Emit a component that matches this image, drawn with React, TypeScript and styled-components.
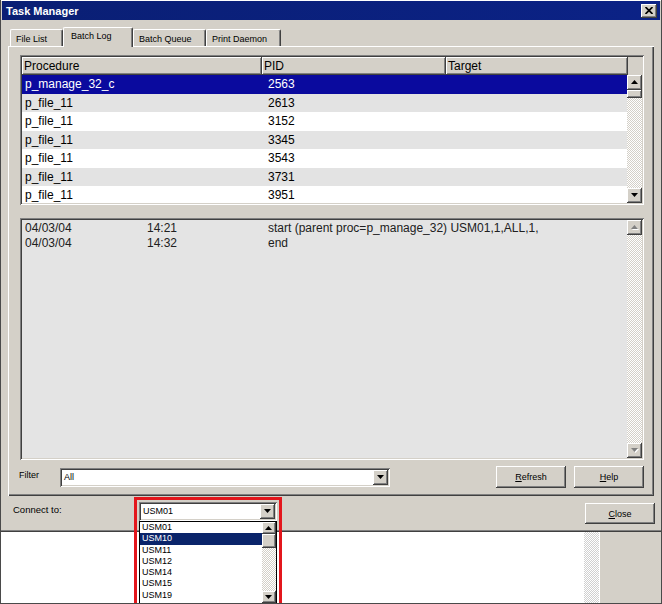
import styled, { createGlobalStyle, css } from 'styled-components';

const FACE = '#d4d0c8';

const raised = css`
  box-shadow: inset -1px -1px #404040, inset 1px 1px #ffffff, inset -2px -2px #808080,
    inset 2px 2px ${FACE};
`;

const sunken = css`
  box-shadow: inset 1px 1px #808080, inset -1px -1px #ffffff, inset 2px 2px #404040,
    inset -2px -2px ${FACE};
`;

const dither = (a: string) => css`
  background: repeating-conic-gradient(${a} 0 25%, #ffffff 0 50%) 0 0 / 2px 2px;
`;

const GlobalStyle = createGlobalStyle`
  html, body {
    margin: 0;
    padding: 0;
    background: #ffffff;
  }
`;

type Job = { proc: string; pid: string };

const jobs: Job[] = [
  { proc: 'p_manage_32_c', pid: '2563' },
  { proc: 'p_file_11', pid: '2613' },
  { proc: 'p_file_11', pid: '3152' },
  { proc: 'p_file_11', pid: '3345' },
  { proc: 'p_file_11', pid: '3543' },
  { proc: 'p_file_11', pid: '3731' },
  { proc: 'p_file_11', pid: '3951' },
];

const logLines = [
  { date: '04/03/04', time: '14:21', text: 'start (parent proc=p_manage_32) USM01,1,ALL,1,' },
  { date: '04/03/04', time: '14:32', text: 'end' },
];

const servers = ['USM01', 'USM10', 'USM11', 'USM12', 'USM14', 'USM15', 'USM19'];

const tabs = [
  { label: 'File List', width: 53 },
  { label: 'Batch Log', width: 70, active: true },
  { label: 'Batch Queue', width: 73 },
  { label: 'Print Daemon', width: 75 },
];

const Arrow = ({ dir, disabled }: { dir: 'up' | 'down'; disabled?: boolean }) => {
  const d = dir === 'up' ? 'M3.5 0L7 4H0Z' : 'M0 0H7L3.5 4Z';
  return (
    <svg width="8" height="5" viewBox="0 0 8 5">
      {disabled && <path d={d} fill="#ffffff" transform="translate(1 1)" />}
      <path d={d} fill={disabled ? '#808080' : '#000000'} />
    </svg>
  );
};

const VScroll = (props: {
  width: number;
  arrow: number;
  thumb?: number;
  disabled?: boolean;
}) => (
  <ScrollBar $w={props.width}>
    <ScrollButton $h={props.arrow}>
      <Arrow dir="up" disabled={props.disabled} />
    </ScrollButton>
    {props.thumb ? <ScrollThumb $h={props.thumb} /> : null}
    <ScrollTrack />
    <ScrollButton $h={props.arrow}>
      <Arrow dir="down" disabled={props.disabled} />
    </ScrollButton>
  </ScrollBar>
);

export default function App() {
  return (
    <>
      <GlobalStyle />
      <Screen>
        <Window>
          <TitleBar>
            <Title>Task Manager</Title>
            <TitleButton>
              <svg width="8" height="7" viewBox="0 0 8 7">
                <path d="M0.5 0L7.5 7M7.5 0L0.5 7" stroke="#000" strokeWidth="1.7" />
              </svg>
            </TitleButton>
          </TitleBar>

          <TabStrip>
            {tabs.map((t) => (
              <Tab key={t.label} $active={!!t.active} $w={t.width}>
                {t.label}
              </Tab>
            ))}
          </TabStrip>

          <Panel>
            <ListView>
              <HeaderRow>
                <HeaderCell $w={240}>Procedure</HeaderCell>
                <HeaderCell $w={184}>PID</HeaderCell>
                <HeaderCell $w={182}>Target</HeaderCell>
              </HeaderRow>
              <ListBody>
                <Rows>
                  {jobs.map((j, i) => (
                    <Row key={j.pid} $selected={i === 0} $alt={i % 2 === 1}>
                      <span>{j.proc}</span>
                      <span>{j.pid}</span>
                      <span />
                    </Row>
                  ))}
                </Rows>
                <VScroll width={15} arrow={15} thumb={8} />
              </ListBody>
            </ListView>

            <LogView>
              <LogLines>
                {logLines.map((l) => (
                  <LogLine key={l.time}>
                    <span>{l.date}</span>
                    <span>{l.time}</span>
                    <span>{l.text}</span>
                  </LogLine>
                ))}
              </LogLines>
              <VScroll width={15} arrow={15} disabled />
            </LogView>

            <FilterRow>
              <FieldLabel>Filter</FieldLabel>
              <ComboBox $w={330} $h={19}>
                <ComboValue>All</ComboValue>
                <ComboButton $w={15}>
                  <Arrow dir="down" />
                </ComboButton>
              </ComboBox>
              <Actions>
                <Button>
                  <u>R</u>efresh
                </Button>
                <Button>
                  <u>H</u>elp
                </Button>
              </Actions>
            </FilterRow>
          </Panel>

          <Footer>
            <ConnectLabel>Connect to:</ConnectLabel>
            <ComboBox $w={138} $h={19}>
              <ComboValue>USM01</ComboValue>
              <ComboButton $w={15}>
                <Arrow dir="down" />
              </ComboButton>
            </ComboBox>
            <CloseButton>
              <u>C</u>lose
            </CloseButton>
          </Footer>
        </Window>

        <Desktop>
          <DesktopPane />
          <DesktopDither />
          <DesktopSide />
        </Desktop>

        <DropList>
          <DropItems>
            {servers.map((s) => (
              <DropItem key={s} $selected={s === 'USM10'}>
                {s}
              </DropItem>
            ))}
          </DropItems>
          <VScroll width={14} arrow={12} thumb={14} />
        </DropList>

        <Highlight />
      </Screen>
    </>
  );
}

const Screen = styled.div`
  position: relative;
  width: 662px;
  height: 604px;
  box-sizing: border-box;
  border: 1px solid #4a4a4a;
  border-top: none;
  overflow: hidden;
  display: flex;
  flex-direction: column;
  font-family: 'Liberation Sans', Arial, sans-serif;
  color: #000000;
`;

const Window = styled.div`
  height: 532px;
  flex: none;
  box-sizing: border-box;
  display: flex;
  flex-direction: column;
  padding: 0 1px;
  background: ${FACE};
  border-top: 1px solid #ffffff;
  border-bottom: 1px solid #404040;
  box-shadow: inset 0 -1px #808080;
`;

const TitleBar = styled.div`
  height: 19px;
  flex: none;
  display: flex;
  align-items: center;
  justify-content: space-between;
  padding: 0 3px 0 4px;
  background: linear-gradient(90deg, #0a1f74 0%, #0b2286 100%);
`;

const Title = styled.span`
  color: #ffffff;
  font-size: 11px;
  font-weight: 700;
`;

const TitleButton = styled.div`
  width: 16px;
  height: 14px;
  display: flex;
  align-items: center;
  justify-content: center;
  background: ${FACE};
  ${raised}
`;

const TabStrip = styled.div`
  height: 19px;
  flex: none;
  margin-top: 7px;
  padding-left: 8px;
  display: flex;
  align-items: flex-start;
`;

const Tab = styled.div<{ $active: boolean; $w: number }>`
  position: relative;
  z-index: ${(p) => (p.$active ? 1 : 0)};
  width: ${(p) => p.$w}px;
  height: ${(p) => (p.$active ? 20 : 17)}px;
  margin-top: ${(p) => (p.$active ? 0 : 2)}px;
  box-sizing: border-box;
  padding: ${(p) => (p.$active ? '3px 0 0 7px' : '4px 0 0 5px')};
  font-size: 9px;
  background: ${FACE};
  border-top: 1px solid #ffffff;
  border-left: 1px solid #ffffff;
  border-right: 1px solid #404040;
  border-radius: 2px 2px 0 0;
  box-shadow: inset -1px 0 #808080;
`;

const Panel = styled.div`
  width: 646px;
  height: 450px;
  margin-left: 6px;
  box-sizing: border-box;
  padding: 9px 10px 0 12px;
  display: flex;
  flex-direction: column;
  box-shadow: inset 1px 1px #ffffff, inset -1px -1px #404040, inset -2px -2px #808080;
`;

const ListView = styled.div`
  width: 624px;
  height: 150px;
  box-sizing: border-box;
  padding: 2px;
  background: #ffffff;
  display: flex;
  flex-direction: column;
  ${sunken}
`;

const HeaderRow = styled.div`
  height: 18px;
  flex: none;
  display: flex;
  background: ${FACE};
`;

const HeaderCell = styled.div<{ $w: number }>`
  width: ${(p) => p.$w}px;
  box-sizing: border-box;
  padding-left: 2px;
  font-size: 12px;
  line-height: 18px;
  ${raised}
`;

const ListBody = styled.div`
  flex: 1;
  display: flex;
  min-height: 0;
`;

const Rows = styled.div`
  flex: 1;
  display: flex;
  flex-direction: column;
  overflow: hidden;
`;

const Row = styled.div<{ $selected: boolean; $alt: boolean }>`
  flex: none;
  height: 18.5px;
  box-sizing: border-box;
  display: grid;
  grid-template-columns: 243px 184px 1fr;
  padding: 1px 0 0 3px;
  font-size: 12px;
  line-height: 17px;
  color: ${(p) => (p.$selected ? '#ffffff' : '#000000')};
  background: ${(p) => (p.$selected ? '#0a0a9e' : p.$alt ? '#e3e3e3' : '#ffffff')};
`;

const ScrollBar = styled.div<{ $w: number }>`
  width: ${(p) => p.$w}px;
  flex: none;
  display: flex;
  flex-direction: column;
`;

const ScrollButton = styled.div<{ $h: number }>`
  height: ${(p) => p.$h}px;
  flex: none;
  display: flex;
  align-items: center;
  justify-content: center;
  background: ${FACE};
  ${raised}
`;

const ScrollThumb = styled.div<{ $h: number }>`
  height: ${(p) => p.$h}px;
  flex: none;
  background: ${FACE};
  ${raised}
`;

const ScrollTrack = styled.div`
  flex: 1;
  ${dither(FACE)}
`;

const LogView = styled.div`
  width: 624px;
  height: 242px;
  margin-top: 13px;
  box-sizing: border-box;
  padding: 2px;
  display: flex;
  background: #e4e4e4;
  ${sunken}
`;

const LogLines = styled.div`
  flex: 1;
  padding: 1px 0 0 3px;
`;

const LogLine = styled.div`
  display: grid;
  grid-template-columns: 122px 121px 1fr;
  font-size: 12px;
  line-height: 15px;
  color: #202020;
`;

const FilterRow = styled.div`
  height: 22px;
  margin-top: 6px;
  display: flex;
  align-items: center;
`;

const FieldLabel = styled.span`
  width: 41px;
  margin: -4px 0 0 -1px;
  font-size: 9px;
`;

const ComboBox = styled.div<{ $w: number; $h: number }>`
  width: ${(p) => p.$w}px;
  height: ${(p) => p.$h}px;
  flex: none;
  box-sizing: border-box;
  padding: 2px;
  display: flex;
  background: #ffffff;
  ${sunken}
`;

const ComboValue = styled.span`
  flex: 1;
  padding-left: 2px;
  font-size: 9px;
  line-height: 15px;
`;

const ComboButton = styled.div<{ $w: number }>`
  width: ${(p) => p.$w}px;
  display: flex;
  align-items: center;
  justify-content: center;
  background: ${FACE};
  ${raised}
`;

const Actions = styled.div`
  margin-left: auto;
  display: flex;
  gap: 8px;
`;

const Button = styled.button`
  width: 70px;
  height: 22px;
  padding: 0;
  border: none;
  font-family: inherit;
  font-size: 9px;
  color: #000000;
  background: ${FACE};
  ${raised}
`;

const CloseButton = styled(Button)`
  height: 21px;
  margin: 1px 0 0 auto;
`;

const Footer = styled.div`
  flex: 1;
  display: flex;
  align-items: flex-start;
  padding: 6px 5px 0 11px;
`;

const ConnectLabel = styled.span`
  width: 126px;
  margin-top: 2px;
  font-size: 9.5px;
`;

const Desktop = styled.div`
  flex: 1;
  display: grid;
  grid-template-columns: 583px 15px 1fr;
`;

const DesktopPane = styled.div`
  background: #ffffff;
`;

const DesktopDither = styled.div`
  ${dither('#d0d0d0')}
`;

const DesktopSide = styled.div`
  background: ${FACE};
  border-left: 1px solid #ffffff;
`;

const DropList = styled.div`
  position: absolute;
  left: 138px;
  top: 521px;
  width: 138px;
  height: 83px;
  box-sizing: border-box;
  border: 1px solid #000000;
  background: #ffffff;
  display: flex;
  z-index: 2;
`;

const DropItems = styled.div`
  flex: 1;
  display: flex;
  flex-direction: column;
`;

const DropItem = styled.div<{ $selected: boolean }>`
  height: 11.3px;
  padding-left: 2px;
  font-size: 9px;
  line-height: 11.3px;
  color: ${(p) => (p.$selected ? '#ffffff' : '#000000')};
  background: ${(p) => (p.$selected ? '#0a246a' : 'transparent')};
`;

const Highlight = styled.div`
  position: absolute;
  left: 133px;
  top: 497px;
  width: 148px;
  height: 120px;
  box-sizing: border-box;
  border: 3px solid #e3161c;
  pointer-events: none;
  z-index: 3;
`;
